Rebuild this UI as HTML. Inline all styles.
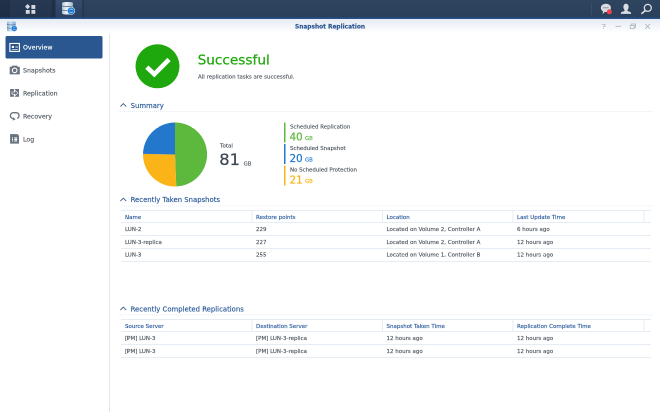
<!DOCTYPE html>
<html lang="en">
<head>
<meta charset="utf-8">
<title>Snapshot Replication</title>
<style>
html,body{margin:0;padding:0;}
body{width:660px;height:412px;overflow:hidden;background:#fff;position:relative;font-family:"DejaVu Sans","Liberation Sans",sans-serif;color:#505a64;}
#wrap{position:absolute;left:0;top:0;width:1320px;height:824px;transform:scale(0.5);transform-origin:0 0;overflow:hidden;background:#fff;will-change:transform;}
.abs{position:absolute;white-space:nowrap;line-height:1;-webkit-text-stroke:0.3px currentColor;}
</style>
</head>
<body>
<div id="wrap">
<div style="position:absolute;left:0px;top:0px;width:1320px;height:34.6px;background:#2a3f5a;background:linear-gradient(#2f445e,#2a3f5a);"></div>
<div style="position:absolute;left:0px;top:0px;width:110.6px;height:34.6px;background:#1e2f48;background:linear-gradient(#203149,#1c2d45);"></div>
<div style="position:absolute;left:20px;top:0px;width:82.6px;height:34.6px;background:#24374f;background:linear-gradient(#27395290,#22354d);background:linear-gradient(#273952,#22354d);"></div>
<div style="position:absolute;left:110.6px;top:0px;width:54.6px;height:34.6px;background:#2f4565;background:linear-gradient(#364c6c,#2a4060);"></div>
<div style="position:absolute;left:165.2px;top:0px;width:2px;height:34.6px;background:#1d2e46;"></div>
<div style="position:absolute;left:0px;top:34.6px;width:1320px;height:3.6px;background:#25518c;"></div>
<div style="position:absolute;left:0px;top:38.2px;width:1320px;height:28px;background:#eef3f9;background:linear-gradient(#e5ebf3,#ffffff);"></div>
<div style="position:absolute;left:218px;top:68px;width:2px;height:756px;background:#e3e6ea;"></div>
<div style="position:absolute;left:11px;top:72px;width:194px;height:45px;background:#2a578f;border-radius:3px;"></div>
<div class="abs " style="left:0px;top:47.5px;font-size:11.7px;color:#2a5592;width:1320px;text-align:center;font-weight:bold;">Snapshot Replication</div>
<div class="abs " style="left:46px;top:89.42px;font-size:12.5px;color:#fff;">Overview</div>
<div class="abs " style="left:46px;top:135.43px;font-size:12.5px;color:#4f5760;">Snapshots</div>
<div class="abs " style="left:46px;top:181.43px;font-size:12.5px;color:#4f5760;">Replication</div>
<div class="abs " style="left:46px;top:227.43px;font-size:12.5px;color:#4f5760;">Recovery</div>
<div class="abs " style="left:46px;top:273.43px;font-size:12.5px;color:#4f5760;">Log</div>
<svg class="abs" style="left:270px;top:88px" width="90" height="90" viewBox="0 0 45 45"><circle cx="22.5" cy="22.3" r="22" fill="#1fa80e"/><path d="M11.8 23.2 L19.3 30.2 L34 15.5" fill="none" stroke="#fff" stroke-width="4.6"/></svg>
<div class="abs " style="left:395.2px;top:105.9px;font-size:27.3px;color:#22a80f;-webkit-text-stroke-width:0.5px;">Successful</div>
<div class="abs " style="left:396px;top:147.69px;font-size:11px;color:#4f5760;">All replication tasks are successful.</div>
<svg class="abs" style="left:238px;top:204px" width="18" height="12" viewBox="0 0 9 6"><path d="M1.4 4.6 L4.3 1.6 L7.2 4.6" fill="none" stroke="#2f5288" stroke-width="0.85"/></svg>
<div class="abs " style="left:261.2px;top:204.56px;font-size:13.76px;color:#2a5a9a;">Summary</div>
<div style="position:absolute;left:236px;top:222px;width:1070px;height:2px;background:repeating-linear-gradient(90deg,#e6ecf4 0,#e6ecf4 2px,transparent 2px,transparent 4px);"></div>
<svg class="abs" style="left:286px;top:245px" width="128" height="128" viewBox="-32 -32 64 64"><path d="M0 0 L0 -32 A32 32 0 0 1 1.23 31.98 Z" fill="#5cb93e"/><path d="M0 0 L1.23 31.98 A32 32 0 0 1 -31.99 -0.62 Z" fill="#fbb418"/><path d="M0 0 L-31.99 -0.62 A32 32 0 0 1 0 -32 Z" fill="#2478cc"/></svg>
<div class="abs " style="left:440px;top:285.61px;font-size:11.1px;color:#4f5760;">Total</div>
<div class="abs " style="left:438.6px;top:303.42px;font-size:32.6px;color:#3e4854;-webkit-text-stroke-width:0.5px;">81</div>
<div class="abs " style="left:487.2px;top:322.03px;font-size:10.6px;color:#4f5760;">GB</div>
<div style="position:absolute;left:568.4px;top:245px;width:3px;height:40px;background:#5cb93e;"></div>
<div class="abs " style="left:580px;top:249.28px;font-size:10.9px;color:#4f5760;">Scheduled Replication</div>
<div class="abs " style="left:579.2px;top:263.74px;font-size:20.4px;color:#5cb93e;-webkit-text-stroke-width:0.5px;">40</div>
<div class="abs " style="left:610px;top:271.86px;font-size:10.8px;color:#5cb93e;">GB</div>
<div style="position:absolute;left:568.4px;top:288px;width:3px;height:40px;background:#2478cc;"></div>
<div class="abs " style="left:580px;top:292.28px;font-size:10.9px;color:#4f5760;">Scheduled Snapshot</div>
<div class="abs " style="left:579.2px;top:306.74px;font-size:20.4px;color:#2478cc;-webkit-text-stroke-width:0.5px;">20</div>
<div class="abs " style="left:610px;top:314.86px;font-size:10.8px;color:#2478cc;">GB</div>
<div style="position:absolute;left:568.4px;top:331px;width:3px;height:40px;background:#fbb418;"></div>
<div class="abs " style="left:580px;top:335.28px;font-size:10.9px;color:#4f5760;">No Scheduled Protection</div>
<div class="abs " style="left:579.2px;top:349.74px;font-size:20.4px;color:#fbb418;-webkit-text-stroke-width:0.5px;">21</div>
<div class="abs " style="left:610px;top:357.86px;font-size:10.8px;color:#fbb418;">GB</div>
<svg class="abs" style="left:18px;top:84px" width="24" height="22" viewBox="9 42 12 11"><rect x="9.9" y="43.5" width="9.5" height="7.9" fill="#214b82" stroke="#fff" stroke-width="1.15"/><rect x="11.8" y="45.9" width="2.3" height="2.1" fill="#fff"/><rect x="15.3" y="45.9" width="2.7" height="0.8" fill="#9fb4d0"/><rect x="15.3" y="47.2" width="2.7" height="0.8" fill="#9fb4d0"/><rect x="11.8" y="49" width="6.1" height="0.75" fill="#e8eef6"/></svg>
<svg class="abs" style="left:18px;top:128px" width="24" height="24" viewBox="9 64 12 12"><path d="M9.7 66.8 H11.6 L12.2 65.6 H17.1 L17.7 66.8 H19.8 V74.4 H9.7 Z" fill="#69737e"/><circle cx="14.65" cy="70.4" r="2.3" fill="none" stroke="#fff" stroke-width="1.1"/></svg>
<svg class="abs" style="left:18px;top:176px" width="24" height="20" viewBox="9 88 12 10"><rect x="10.1" y="89" width="3.8" height="7.8" fill="#69737e"/><rect x="14.7" y="89" width="4.3" height="7.8" fill="#69737e"/><path d="M11.9 92 H14.9 V90.2 L18.1 93 L14.9 95.8 V94.2 H11.9 Z" fill="#69737e" stroke="#fff" stroke-width="0.6" stroke-linejoin="miter"/></svg>
<svg class="abs" style="left:18px;top:222px" width="24" height="22" viewBox="0 0 12 11"><path d="M8.2 7.4 C9.6 6.9 10 5.7 10 4.6 C10 2.6 8.8 1.7 6.9 1.7 L4.5 1.7 C2.6 1.7 1.4 2.8 1.4 4.6 C1.4 6.2 2.4 7.3 4.6 7.8" fill="none" stroke="#69737e" stroke-width="1.3"/><path d="M4.1 6.3 L6.7 8.2 L3.8 9.6 Z" fill="#69737e"/></svg>
<svg class="abs" style="left:18px;top:266px" width="24" height="24" viewBox="9 133 12 12"><path d="M10.1 134.1 H17.7 L19 135.4 V143.6 H10.1 Z" fill="#69737e"/><path d="M17.7 134.1 V135.4 H19" fill="none" stroke="#aab1b9" stroke-width="0.4"/><rect x="12" y="137.4" width="1" height="1.1" fill="#fff"/><rect x="14.3" y="137.4" width="2.9" height="1.1" fill="#fff"/><rect x="12" y="138.9" width="1" height="1.1" fill="#fff"/><rect x="14.3" y="138.9" width="2.9" height="1.1" fill="#fff"/><rect x="12" y="140.4" width="1" height="1.1" fill="#fff"/><rect x="14.3" y="140.4" width="2.9" height="1.1" fill="#fff"/></svg>
<svg class="abs" style="left:48px;top:6px" width="28" height="24" viewBox="24 3 14 12"><path d="M27.6 4 L30.1 6.6 L27.6 9.2 L25.1 6.6 Z" fill="#d6dae0"/><rect x="31.4" y="5" width="3.9" height="3.9" fill="#d6dae0"/><rect x="25.8" y="10" width="3.9" height="3.8" fill="#d6dae0"/><rect x="31.4" y="10" width="3.9" height="3.8" fill="#d6dae0"/></svg>
<svg class="abs" style="left:123.4px;top:3px" width="28" height="28" viewBox="0 0 14 14"><defs><linearGradient id="dg61" x1="0" y1="0" x2="1" y2="0"><stop offset="0" stop-color="#b4c6d8"/><stop offset="0.4" stop-color="#eef3f8"/><stop offset="1" stop-color="#a9bccf"/></linearGradient></defs><path d="M0.6 1.4 C0.6 0.2 11.4 0.2 11.4 1.4 V12 C11.4 13.4 0.6 13.4 0.6 12 Z" fill="url(#dg61)"/><path d="M0.6 4.4 C2 5.1 10 5.1 11.4 4.4 M0.6 8.4 C2 9.1 10 9.1 11.4 8.4" fill="none" stroke="#4a5f78" stroke-width="0.75"/><circle cx="9.6" cy="9.3" r="4" fill="#e4ecf4"/><circle cx="9.6" cy="9.3" r="3.45" fill="#1777d2"/><path d="M8 8.3 C8.6 7.3 10.4 7.2 11.1 8.4 M11.2 10.2 C10.6 11.3 8.8 11.4 8 10.2" fill="none" stroke="#cfe4f8" stroke-width="0.7"/></svg>
<svg class="abs" style="left:12.8px;top:41.6px" width="22.4" height="22.4" viewBox="0 0 14 14"><defs><linearGradient id="dg6" x1="0" y1="0" x2="1" y2="0"><stop offset="0" stop-color="#8fb4d6"/><stop offset="0.4" stop-color="#cfe0ef"/><stop offset="1" stop-color="#7fa8cf"/></linearGradient></defs><path d="M0.6 1.4 C0.6 0.2 11.4 0.2 11.4 1.4 V12 C11.4 13.4 0.6 13.4 0.6 12 Z" fill="url(#dg6)"/><path d="M0.6 4.4 C2 5.1 10 5.1 11.4 4.4 M0.6 8.4 C2 9.1 10 9.1 11.4 8.4" fill="none" stroke="#3f6288" stroke-width="0.75"/><circle cx="9.6" cy="9.3" r="4" fill="#e6eef7"/><circle cx="9.6" cy="9.3" r="3.45" fill="#1777d2"/><path d="M8 8.3 C8.6 7.3 10.4 7.2 11.1 8.4 M11.2 10.2 C10.6 11.3 8.8 11.4 8 10.2" fill="none" stroke="#cfe4f8" stroke-width="0.7"/></svg>
<div style="position:absolute;left:1182px;top:6px;width:1.6px;height:24px;background:#3b4d68;"></div>
<svg class="abs" style="left:1196px;top:2px" width="32" height="32" viewBox="598 1 16 16"><path d="M605.9 3.8 C609 3.8 610.9 5.6 610.9 7.9 C610.9 10.3 608.9 12 605.9 12 C605.5 12 605 12 604.6 11.9 C604.2 13 603.2 13.8 602.3 13.9 C602.9 13.2 603.1 12.2 602.9 11.3 C601.7 10.5 600.9 9.4 600.9 7.9 C600.9 5.6 602.9 3.8 605.9 3.8 Z" fill="#d9dde3"/><circle cx="603.9" cy="7.8" r="0.6" fill="#4a5a70"/><circle cx="605.9" cy="7.8" r="0.6" fill="#4a5a70"/><circle cx="607.9" cy="7.8" r="0.6" fill="#4a5a70"/><circle cx="609.3" cy="11.9" r="2.5" fill="#f6404b"/></svg>
<svg class="abs" style="left:1238px;top:4px" width="28" height="28" viewBox="619 2 14 14"><path d="M626 3.7 C627.6 3.7 628.6 5 628.6 6.9 C628.6 8.4 627.9 9.6 627.3 10.2 C627.3 11 628.5 11.4 629.8 11.8 C630.8 12.1 631.1 12.7 631.1 13.9 H620.8 C620.8 12.7 621.2 12.1 622.2 11.8 C623.5 11.4 624.7 11 624.7 10.2 C624.1 9.6 623.4 8.4 623.4 6.9 C623.4 5 624.4 3.7 626 3.7 Z" fill="#d9dde3"/></svg>
<svg class="abs" style="left:1280px;top:4px" width="28" height="28" viewBox="640 2 14 14"><circle cx="647.8" cy="7.9" r="3.5" fill="none" stroke="#d9dde3" stroke-width="1.3"/><path d="M645.3 10.6 L641.9 13.4" stroke="#d9dde3" stroke-width="1.7" stroke-linecap="round"/></svg>
<svg class="abs" style="left:1200px;top:42px" width="108" height="20" viewBox="600 21 54 10"><path d="M601.8 24.3 H605 V26.2 H603.5 V27.2 M603.5 28 V28.8" fill="none" stroke="#a9b0b8" stroke-width="0.7"/><path d="M615.5 26.3 H621" stroke="#a9b0b8" stroke-width="0.8"/><path d="M631.5 25.3 V24 H635.5 V27.3 H634.2 M630.2 25.4 H634.2 V28.6 H630.2 Z" fill="none" stroke="#a9b0b8" stroke-width="0.8"/><path d="M645.2 24 L650 28.8 M650 24 L645.2 28.8" stroke="#a9b0b8" stroke-width="0.8"/></svg>
<svg class="abs" style="left:238px;top:392.8px" width="18" height="12" viewBox="0 0 9 6"><path d="M1.4 4.6 L4.3 1.6 L7.2 4.6" fill="none" stroke="#2f5288" stroke-width="0.85"/></svg>
<div class="abs " style="left:261.2px;top:393.36px;font-size:13.76px;color:#2a5a9a;">Recently Taken Snapshots</div>
<div style="position:absolute;left:236px;top:410.8px;width:1070px;height:2px;background:repeating-linear-gradient(90deg,#e6ecf4 0,#e6ecf4 2px,transparent 2px,transparent 4px);"></div>
<div style="position:absolute;left:242px;top:420.4px;width:1060px;height:2px;background:#e6ecf3;"></div>
<div style="position:absolute;left:242px;top:444.4px;width:1060px;height:2px;background:#e6ecf3;"></div>
<div style="position:absolute;left:502.8px;top:422.4px;width:2px;height:22px;background:#e6ecf3;"></div>
<div style="position:absolute;left:764px;top:422.4px;width:2px;height:22px;background:#e6ecf3;"></div>
<div style="position:absolute;left:1025.4px;top:422.4px;width:2px;height:22px;background:#e6ecf3;"></div>
<div style="position:absolute;left:1286.6px;top:422.4px;width:2px;height:22px;background:#e6ecf3;"></div>
<div class="abs " style="left:250px;top:429.09px;font-size:11px;color:#2a5a9a;">Name</div>
<div class="abs " style="left:512px;top:429.09px;font-size:11px;color:#2a5a9a;">Restore points</div>
<div class="abs " style="left:773px;top:429.09px;font-size:11px;color:#2a5a9a;">Location</div>
<div class="abs " style="left:1034px;top:429.09px;font-size:11px;color:#2a5a9a;">Last Update Time</div>
<div class="abs " style="left:250px;top:453.09px;font-size:11px;color:#4f5760;">LUN-2</div>
<div class="abs " style="left:512px;top:453.09px;font-size:11px;color:#4f5760;">229</div>
<div class="abs " style="left:773px;top:453.09px;font-size:11px;color:#4f5760;">Located on Volume 2, Controller A</div>
<div class="abs " style="left:1034px;top:453.09px;font-size:11px;color:#4f5760;">6 hours ago</div>
<div style="position:absolute;left:242px;top:470.4px;width:1060px;height:2px;background:#e6ecf3;"></div>
<div class="abs " style="left:250px;top:478.79px;font-size:11px;color:#4f5760;">LUN-3-replica</div>
<div class="abs " style="left:512px;top:478.79px;font-size:11px;color:#4f5760;">227</div>
<div class="abs " style="left:773px;top:478.79px;font-size:11px;color:#4f5760;">Located on Volume 2, Controller A</div>
<div class="abs " style="left:1034px;top:478.79px;font-size:11px;color:#4f5760;">12 hours ago</div>
<div style="position:absolute;left:242px;top:496.1px;width:1060px;height:2px;background:#e6ecf3;"></div>
<div class="abs " style="left:250px;top:504.49px;font-size:11px;color:#4f5760;">LUN-3</div>
<div class="abs " style="left:512px;top:504.49px;font-size:11px;color:#4f5760;">255</div>
<div class="abs " style="left:773px;top:504.49px;font-size:11px;color:#4f5760;">Located on Volume 1, Controller B</div>
<div class="abs " style="left:1034px;top:504.49px;font-size:11px;color:#4f5760;">12 hours ago</div>
<div style="position:absolute;left:242px;top:521.8px;width:1060px;height:2px;background:#e6ecf3;"></div>
<svg class="abs" style="left:238px;top:611.3px" width="18" height="12" viewBox="0 0 9 6"><path d="M1.4 4.6 L4.3 1.6 L7.2 4.6" fill="none" stroke="#2f5288" stroke-width="0.85"/></svg>
<div class="abs " style="left:261.2px;top:611.86px;font-size:13.76px;color:#2a5a9a;">Recently Completed Replications</div>
<div style="position:absolute;left:236px;top:629.3px;width:1070px;height:2px;background:repeating-linear-gradient(90deg,#e6ecf4 0,#e6ecf4 2px,transparent 2px,transparent 4px);"></div>
<div style="position:absolute;left:242px;top:638.4px;width:1060px;height:2px;background:#e6ecf3;"></div>
<div style="position:absolute;left:242px;top:662.4px;width:1060px;height:2px;background:#e6ecf3;"></div>
<div style="position:absolute;left:502.8px;top:640.4px;width:2px;height:22px;background:#e6ecf3;"></div>
<div style="position:absolute;left:764px;top:640.4px;width:2px;height:22px;background:#e6ecf3;"></div>
<div style="position:absolute;left:1025.4px;top:640.4px;width:2px;height:22px;background:#e6ecf3;"></div>
<div style="position:absolute;left:1286.6px;top:640.4px;width:2px;height:22px;background:#e6ecf3;"></div>
<div class="abs " style="left:250px;top:647.09px;font-size:11px;color:#2a5a9a;">Source Server</div>
<div class="abs " style="left:512px;top:647.09px;font-size:11px;color:#2a5a9a;">Destination Server</div>
<div class="abs " style="left:773px;top:647.09px;font-size:11px;color:#2a5a9a;">Snapshot Taken Time</div>
<div class="abs " style="left:1034px;top:647.09px;font-size:11px;color:#2a5a9a;">Replication Complete Time</div>
<div class="abs " style="left:250px;top:671.09px;font-size:11px;color:#4f5760;">[PM] LUN-3</div>
<div class="abs " style="left:512px;top:671.09px;font-size:11px;color:#4f5760;">[PM] LUN-3-replica</div>
<div class="abs " style="left:773px;top:671.09px;font-size:11px;color:#4f5760;">12 hours ago</div>
<div class="abs " style="left:1034px;top:671.09px;font-size:11px;color:#4f5760;">12 hours ago</div>
<div style="position:absolute;left:242px;top:688.4px;width:1060px;height:2px;background:#e6ecf3;"></div>
<div class="abs " style="left:250px;top:696.79px;font-size:11px;color:#4f5760;">[PM] LUN-3</div>
<div class="abs " style="left:512px;top:696.79px;font-size:11px;color:#4f5760;">[PM] LUN-3-replica</div>
<div class="abs " style="left:773px;top:696.79px;font-size:11px;color:#4f5760;">12 hours ago</div>
<div class="abs " style="left:1034px;top:696.79px;font-size:11px;color:#4f5760;">12 hours ago</div>
<div style="position:absolute;left:242px;top:714.1px;width:1060px;height:2px;background:#e6ecf3;"></div>
</div>
</body>
</html>
